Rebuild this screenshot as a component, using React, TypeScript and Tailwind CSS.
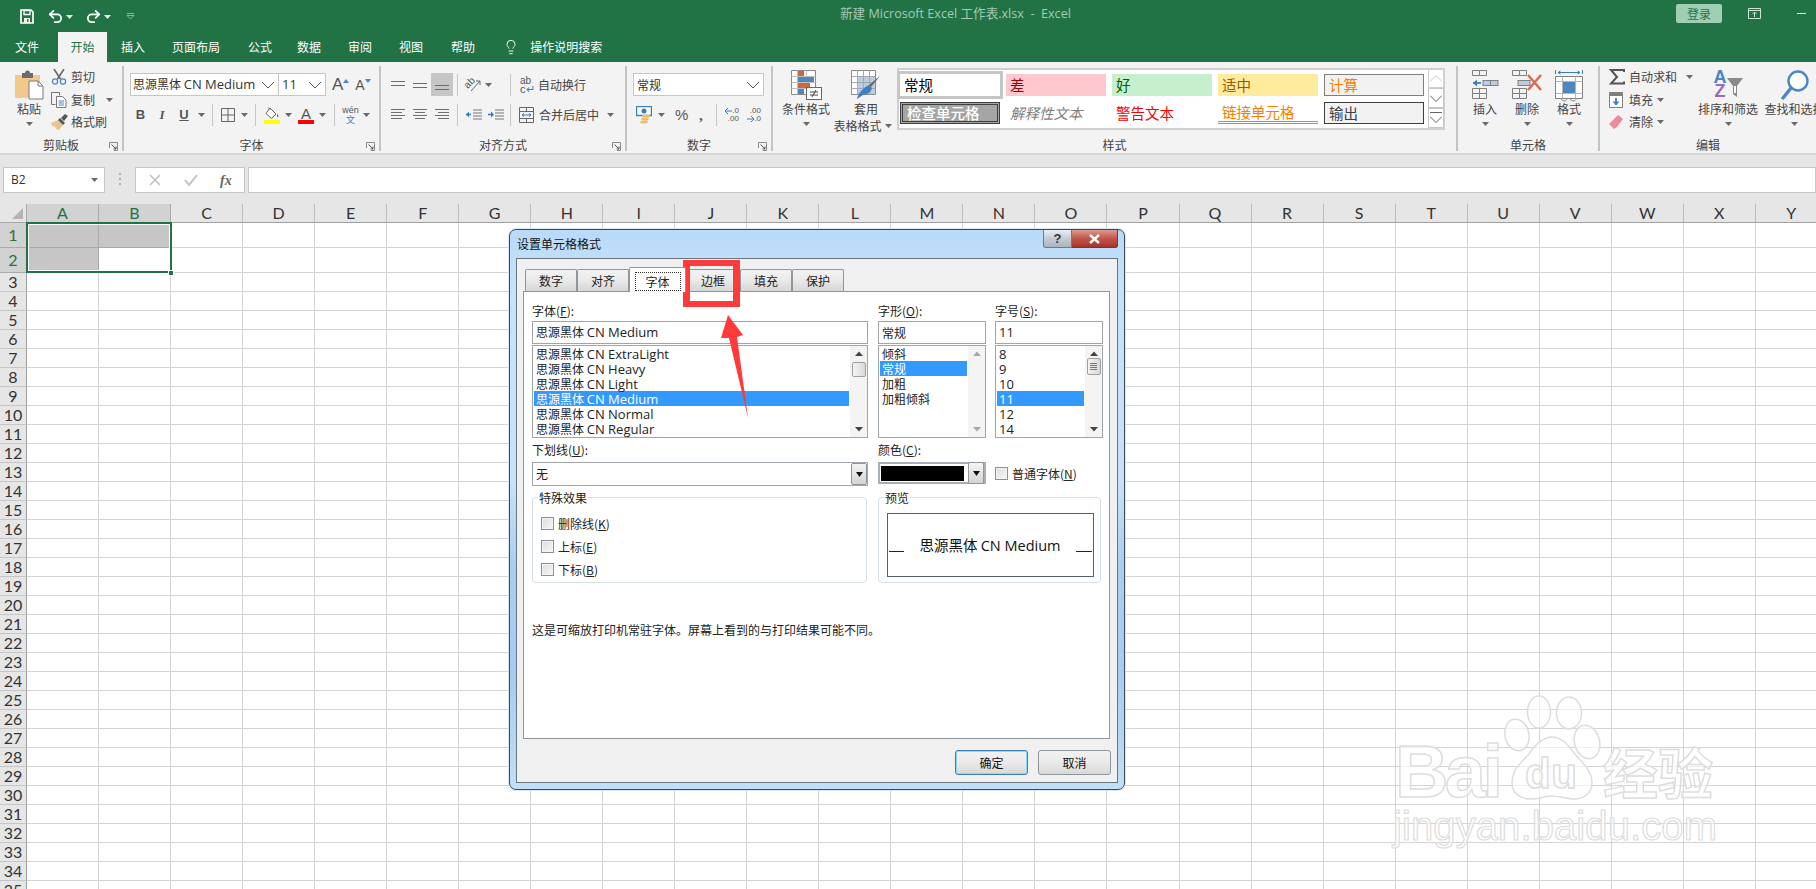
import React from 'react';
import { Lightbulb, Redo2, Undo2 } from 'lucide-react';

const columns = 'ABCDEFGHIJKLMNOPQRSTUVWXY'.split('');
const rows = Array.from({ length: 35 }, (_, i) => i + 1);

const Caret = ({ className = '', color = '#6a6a6a' }: { className?: string; color?: string }) => (
  <svg width="7" height="4" viewBox="0 0 7 4" className={`shrink-0 ${className}`}>
    <path d="M0 0h7L3.5 4z" fill={color} />
  </svg>
);

const Chevron = ({ className = '' }: { className?: string }) => (
  <svg width="14" height="8" viewBox="0 0 14 8" className={`shrink-0 ${className}`}>
    <path d="M1 1l6 6 6-6" fill="none" stroke="#555" strokeWidth="1" />
  </svg>
);

const Sep = ({ className = '' }: { className?: string }) => (
  <div className={`w-[1px] h-[22px] shrink-0 bg-[#c6c6c6] ${className}`} />
);

const GroupSep = () => <div className="w-[2px] h-[85px] shrink-0 bg-[#c4c4c4]" />;

const Launcher = () => (
  <svg width="9" height="9" viewBox="0 0 9 9" className="absolute right-[4px] bottom-[2px]">
    <path d="M.5 6V.5H8.5V8.5H5" fill="none" stroke="#8a8a8a" />
    <path d="M2.5 2.5L7 7M7 4.5V7H4.5" fill="none" stroke="#555" />
  </svg>
);

const Group = ({ width, label, launcher, children }: { width: string; label: string; launcher?: boolean; children: React.ReactNode }) => (
  <div className={`relative shrink-0 h-[87px] flex flex-col ${width}`}>
    <div className="h-[71px]">{children}</div>
    <div className="h-[16px] leading-[16px] text-center text-[12px] text-[#444]">{label}</div>
    {launcher && <Launcher />}
  </div>
);

// align icon lines: y offsets, and left / center / right
const AlignIcon = ({ ys, mode }: { ys: number[]; mode: 'l' | 'c' | 'r' | 'f' }) => (
  <svg width="14" height="12" viewBox="0 0 14 12" className="shrink-0">
    {ys.map((y, i) => {
      const short = mode !== 'f' && i % 2 === 1;
      const x1 = mode === 'r' && short ? 3 : mode === 'c' && short ? 2 : 0;
      const x2 = mode === 'l' && short ? 11 : mode === 'c' && short ? 12 : 14;
      return <line key={i} x1={x1} x2={x2} y1={y + 0.5} y2={y + 0.5} stroke="#6e6e6e" />;
    })}
  </svg>
);

const PasteIcon = () => (
  <svg width="29" height="30" viewBox="0 0 29 30" className="block">
    <path d="M0 5h25v23H0z" fill="#f1c98a" />
    <path d="M7 3h3a2.5 2.5 0 0 1 5 0h3v5H7z" fill="#6c6c6c" />
    <path d="M14 11h9l5 5v13H14z" fill="#fff" stroke="#7a7a7a" />
    <path d="M23 11v5h5" fill="none" stroke="#7a7a7a" />
  </svg>
);

const ScissorsIcon = () => (
  <svg width="16" height="16" viewBox="0 0 16 16">
    <path d="M3 0l6.5 10M13 0L6.5 10" stroke="#666" strokeWidth="1.6" fill="none" />
    <circle cx="4" cy="12.5" r="2.6" fill="none" stroke="#4a86c5" strokeWidth="1.2" />
    <circle cx="12" cy="12.5" r="2.6" fill="none" stroke="#4a86c5" strokeWidth="1.2" />
  </svg>
);

const CopyIcon = () => (
  <svg width="16" height="16" viewBox="0 0 16 16">
    <path d="M.5.5h8v3M.5.5v12h4" fill="none" stroke="#777" />
    <path d="M5.5 4.5h6l3.5 3.5v7.500h-9.500z" fill="#fff" stroke="#777" />
    <path d="M7.500 9h5.500M7.500 11h5.500M7.500 13h5.500" stroke="#4a86c5" />
  </svg>
);

const BrushIcon = () => (
  <svg width="18" height="16" viewBox="0 0 18 16">
    <path d="M0 9l7-3 5 5-4 5-3-1-1-3-2 1z" fill="#eac48c" />
    <path d="M7 6l2-2 5 5-2 2z" fill="#555" />
    <path d="M10 4l4-4 3 2-4 5z" fill="#555" />
  </svg>
);

const FontLetter = ({ size, up }: { size: string; up: boolean }) => (
  <div className="relative flex items-end h-[16px]">
    <span className={`leading-[16px] text-[#555] [font-family:'Liberation_Sans',sans-serif] ${size}`}>A</span>
    <svg width="6" height="4" viewBox="0 0 6 4" className="mb-[10px]">
      <path d={up ? 'M0 4h6L3 0z' : 'M0 0h6L3 4z'} fill="#4a86c5" />
    </svg>
  </div>
);

const BorderIcon = () => (
  <svg width="14" height="14" viewBox="0 0 14 14" className="shrink-0">
    <path d="M.5.500h13v13H.5zM7 .5v13M.5 7h13" fill="none" stroke="#666" />
  </svg>
);

const FillIcon = () => (
  <svg width="16" height="17" viewBox="0 0 16 17" className="shrink-0">
    <path d="M6 1l6 6-4.500 4.500L2 6.500z" fill="#fff" stroke="#666" />
    <path d="M4 .5l2 2" stroke="#666" />
    <path d="M13.500 7c1 1.500 1.500 2.500.5 3s-1.500-1.500-.5-3z" fill="#666" />
    <rect x="0" y="13" width="16" height="4" fill="#ffff00" />
  </svg>
);

const OrientIcon = () => (
  <div className="relative w-[16px] h-[16px] shrink-0">
    <span className="absolute left-[-2px] top-[0px] text-[10px] leading-[12px] text-[#555] rotate-[-45deg] [font-family:'Liberation_Sans',sans-serif]">ab</span>
    <svg width="16" height="16" viewBox="0 0 16 16" className="absolute left-[0px] top-[0px]">
      <path d="M5 14L14 4M10 4h4v4" fill="none" stroke="#666" />
    </svg>
  </div>
);

const IndentIcon = ({ flip }: { flip?: boolean }) => (
  <svg width="16" height="12" viewBox="0 0 16 12" className="shrink-0">
    <path d="M7 1h9M7 4h9M7 7h9M7 10h9" stroke="#777" />
    <path d="M0 5.500h5" stroke="#3b7dc4" strokeWidth="1.600" />
    <path d={flip ? 'M3 2.500l3 3-3 3z' : 'M3 2.500l-3 3 3 3z'} fill="#3b7dc4" />
  </svg>
);

const MergeIcon = () => (
  <svg width="15" height="16" viewBox="0 0 15 16" className="shrink-0">
    <path d="M.5.500h14v15H.5zM.5 4.500h14M.5 11.500h14M7.500.5v4M7.500 11.500v4" fill="none" stroke="#666" />
    <path d="M3 8h9M3 8l2-1.500M3 8l2 1.500M12 8l-2-1.500M12 8l-2 1.500" fill="none" stroke="#3b7dc4" />
  </svg>
);

const MoneyIcon = () => (
  <svg width="16" height="18" viewBox="0 0 16 18" className="shrink-0">
    <rect x=".5" y=".5" width="15" height="9" fill="#fff" stroke="#3b7dc4" strokeWidth="1.400" />
    <circle cx="8" cy="5" r="2.500" fill="#3b7dc4" />
    <ellipse cx="10" cy="10" rx="4" ry="1.600" fill="#eebd71" />
    <ellipse cx="9" cy="13" rx="4" ry="1.600" fill="#eebd71" />
    <ellipse cx="8" cy="16" rx="4" ry="1.600" fill="#eebd71" />
  </svg>
);

const DecimalIcon = ({ left, right, inc }: { left: string; right: string; inc: boolean }) => (
  <div className="w-[15px] h-[16px] flex flex-col text-[8px] leading-[8px] text-[#555] [font-family:'Liberation_Sans',sans-serif]">
    <div className="flex justify-end items-center h-[8px]">
      {inc && <svg width="7" height="6" viewBox="0 0 7 6"><path d="M0 3h7M0 3l3-3M0 3l3 3" stroke="#3b7dc4" fill="none" /></svg>}
      <span>{left}</span>
    </div>
    <div className="flex justify-end items-center h-[8px]">
      {!inc && <svg width="7" height="6" viewBox="0 0 7 6"><path d="M0 3h7M7 3L4 0M7 3L4 6" stroke="#3b7dc4" fill="none" /></svg>}
      <span>{right}</span>
    </div>
  </div>
);

const CondFormatIcon = () => (
  <svg width="31" height="30" viewBox="0 0 31 30" className="block">
    <path d="M.5.500h24v24H.5z" fill="#fff" stroke="#8a8a8a" />
    <path d="M6.500.5v24M15.500.5v24M.5 6.500h24M.5 12.500h24M.5 18.500h24" stroke="#bdbdbd" />
    <rect x="7" y="1" width="6" height="5" fill="#d4643f" />
    <rect x="7" y="7" width="16" height="5" fill="#4f86bd" />
    <rect x="7" y="13" width="12" height="5" fill="#d4643f" />
    <rect x="7" y="19" width="6" height="5" fill="#4f86bd" />
    <rect x="15.500" y="17.500" width="15" height="12" fill="#fff" stroke="#666" />
    <path d="M19 22h8M19 25h8M25 20l-4 7" stroke="#444" fill="none" />
  </svg>
);

const TableIcon = () => (
  <svg width="30" height="30" viewBox="0 0 30 30" className="block">
    <path d="M.5.500h24v24H.5z" fill="#fff" stroke="#8a8a8a" />
    <rect x="7" y="6" width="17" height="18" fill="#b9cde5" />
    <path d="M6.500.5v24M12.500.5v24M18.500.5v24M.5 6.500h24M.5 12.500h24M.5 18.500h24" stroke="#a8a8a8" />
    <path d="M29 6l-9 11-2-2z" fill="#666" />
    <path d="M18 15l3 3c-1 4-4 6-9 7l-6 4c1-6 6-11 12-14z" fill="#3f7fc0" />
  </svg>
);

const InsertIcon = () => (
  <svg width="27" height="30" viewBox="0 0 27 30" className="block">
    <path d="M.5.500h14v5H.5zM7.500.5v5M.5 18.500h14v10H.5zM.5 23.500h14M7.500 18.500v10" fill="none" stroke="#808080" />
    <rect x="11" y="10.500" width="15" height="5" fill="#b9cde5" stroke="#808080" />
    <path d="M18.500 10.500v5" stroke="#808080" />
    <path d="M1 13h8" stroke="#3b7dc4" strokeWidth="1.800" />
    <path d="M5 9.500L1 13l4 3.500z" fill="#3b7dc4" />
  </svg>
);

const DeleteIcon = () => (
  <svg width="31" height="30" viewBox="0 0 31 30" className="block">
    <path d="M.5.500h14v5H.5zM7.500.5v5M.5 18.500h14v10H.5zM.5 23.500h14M7.500 18.500v10" fill="none" stroke="#808080" />
    <rect x="6" y="10.500" width="12" height="5" fill="#b9cde5" stroke="#808080" />
    <path d="M16 5l13 15M29 5L16 20" stroke="#dd6a48" strokeWidth="2.400" />
  </svg>
);

const CellFormatIcon = () => (
  <svg width="28" height="32" viewBox="0 0 28 32" className="block">
    <path d="M.5 0v4M27.500 0v4M3 2.500h22M3 2.500l2.500-1.500M3 2.500L5.500 4M25 2.500L22.500 1M25 2.500L22.500 4" fill="none" stroke="#3b7dc4" />
    <path d="M.5 6.500h27v22H.5z" fill="#fff" stroke="#808080" />
    <path d="M.5 11.500h27M.5 23.500h27M7.500 6.500v22M20.500 6.500v22" stroke="#b5b5b5" />
    <rect x="8" y="12" width="12" height="11" fill="#4f86bd" />
    <path d="M6 28.500c1 3 5 3 6 1M15 28.500c1 3 5 3 6 1" fill="none" stroke="#808080" />
  </svg>
);

const SigmaIcon = () => (
  <svg width="16" height="16" viewBox="0 0 16 16" className="shrink-0">
    <path d="M15 3V1H2l6 7-6 6.500h13v-2" fill="none" stroke="#555" strokeWidth="2" />
  </svg>
);

const FillDownIcon = () => (
  <svg width="14" height="16" viewBox="0 0 14 16" className="shrink-0">
    <path d="M.5.500h13v15H.5z" fill="#fff" stroke="#808080" />
    <rect x="1" y="1" width="12" height="3" fill="#808080" />
    <path d="M7 6v7" stroke="#3b7dc4" strokeWidth="1.800" />
    <path d="M3.500 9.500L7 13.500l3.500-4z" fill="#3b7dc4" />
  </svg>
);

const EraserIcon = () => (
  <svg width="14" height="14" viewBox="0 0 14 14" className="shrink-0">
    <path d="M9 0l5 4-6 8-3 2-3-3-2-2z" fill="#ee8a9e" />
  </svg>
);

const FunnelIcon = () => (
  <svg width="16" height="19" viewBox="0 0 16 19">
    <path d="M0 0h16l-6 8v11l-4-3V8z" fill="#8a8a8a" />
    <path d="M7 8h2v7H7z" fill="#fff" />
  </svg>
);

const FindIcon = () => (
  <svg width="28" height="30" viewBox="0 0 28 30" className="block">
    <circle cx="17" cy="11" r="9.500" fill="#fff" stroke="#4a86c5" strokeWidth="2.400" />
    <path d="M10 18L2 28" stroke="#4a86c5" strokeWidth="3.400" strokeLinecap="round" />
  </svg>
);

const SmallBtn = ({ icon, label, caret }: { icon: React.ReactNode; label: string; caret?: string }) => (
  <div className="flex items-center h-[22.500px]">
    <div className="w-[20px] flex justify-start shrink-0">{icon}</div>
    <span className="text-[12px] leading-[18px] text-[#444]">{label}</span>
    {caret && <Caret className={caret} />}
  </div>
);

const BigBtn = ({ icon, label, width }: { icon: React.ReactNode; label: string; width: string }) => (
  <div className={`shrink-0 flex flex-col items-center pt-[4px] ${width}`}>
    <div className="h-[30px] flex items-start justify-center">{icon}</div>
    <div className="h-[18px] leading-[18px] text-[12px] text-[#444] whitespace-nowrap">{label}</div>
    <Caret className="mt-[4px]" />
  </div>
);

const StyleCell = ({ className, children }: { className: string; children: React.ReactNode }) => (
  <div className={`h-[22px] flex items-center text-[14.500px] leading-[20px] pl-[4px] whitespace-nowrap ${className}`}>{children}</div>
);

const FontName = ({ rest, size = 'text-[12px]', latin = 'text-[13px]' }: { rest: string; size?: string; latin?: string }) => (
  <span className={`${size} whitespace-nowrap`}>
    思源黑体 <span className={`${latin} [font-family:'Open_Sans',sans-serif]`}>{rest}</span>
  </span>
);

const ScrollArrow = ({ down, color = '#444' }: { down?: boolean; color?: string }) => (
  <svg width="8" height="5" viewBox="0 0 8 5">
    <path d={down ? 'M0 0h8L4 4.500z' : 'M0 5h8L4 .5z'} fill={color} />
  </svg>
);

const ListBox = ({ items, selected, width, thumb, disabled, grip }: { items: React.ReactNode[]; selected?: number; width: string; thumb?: string; disabled?: boolean; grip?: boolean }) => (
  <div className={`mt-[1px] h-[93px] flex border border-[#9fa6ab] bg-white ${width}`}>
    <div className="flex-1 min-w-0 px-[1px]">
      {items.map((item, i) => (
        <div key={i} className={`h-[15px] leading-[15px] pl-[2px] text-[12px] ${i === selected ? 'bg-[#3399ff] text-white' : 'text-[#222]'}`}>{item}</div>
      ))}
    </div>
    <div className="w-[17px] shrink-0 bg-[#f4f4f4] flex flex-col items-center py-[5px]">
      <ScrollArrow color={disabled ? '#a8a8a8' : '#444'} />
      {thumb && (
        <div className={`w-[14px] border border-[#a0a0a0] rounded-[2px] bg-[linear-gradient(90deg,#f4f4f4,#d8d8d8)] flex flex-col items-center justify-center gap-[1px] ${thumb}`}>
          {grip && [0, 1, 2, 3].map(i => <div key={i} className="w-[7px] h-[1px] bg-[#777]" />)}
        </div>
      )}
      <div className="flex-1" />
      <ScrollArrow down color={disabled ? '#a8a8a8' : '#444'} />
    </div>
  </div>
);

const ComboArrow = () => (
  <div className="w-[16px] h-[22px] shrink-0 border border-[#8f969c] rounded-[2px] bg-[linear-gradient(180deg,#f4f4f4,#d4d4d4)] flex items-center justify-center">
    <svg width="7" height="5" viewBox="0 0 7 5"><path d="M0 0h7L3.500 5z" fill="#111" /></svg>
  </div>
);

const CheckBox = ({ label, hot }: { label: string; hot: string }) => (
  <div className="flex items-center h-[23px]">
    <div className="w-[13px] h-[13px] shrink-0 border border-[#8e8f8f] bg-[linear-gradient(135deg,#dcdcdc,#f8f8f8)] shadow-[inset_0_0_0_1px_#f4f4f4]" />
    <span className="ml-[4px] text-[12px] leading-[18px] text-[#222] whitespace-nowrap">{label}(<span className="underline">{hot}</span>)</span>
  </div>
);

const DialogTab = ({ label, width, active }: { label: string; width: string; active?: boolean }) => (
  active ? (
    <div className={`relative z-10 h-[25px] -mb-[1px] flex items-center justify-center bg-white border border-b-0 border-[#8f969c] rounded-t-[2px] text-[12px] text-[#222] ${width}`}>
      <div className="mt-[2px] w-[46px] h-[19px] leading-[17px] text-center border border-dotted border-[#333]">{label}</div>
    </div>
  ) : (
    <div className={`h-[22px] flex items-center justify-center border border-b-0 border-[#8f969c] rounded-t-[2px] bg-[linear-gradient(180deg,#f2f2f2,#ebebeb_45%,#d6d6d6)] text-[12px] text-[#222] ${width}`}>{label}</div>
  )
);

const DialogButton = ({ label, primary }: { label: string; primary?: boolean }) => (
  <div className={`w-[73px] h-[25px] flex items-center justify-center rounded-[3px] border text-[12px] text-[#111] bg-[linear-gradient(180deg,#f2f2f2,#ebebeb_45%,#d8d8d8)] ${primary ? 'border-[#3c7fb1] shadow-[inset_0_0_0_1px_#8fd8f5]' : 'border-[#8f969c]'}`}>{label}</div>
);

const Watermark = () => (
  <svg width="340" height="165" viewBox="1385 690 340 165" className="absolute left-[1385px] top-[690px] pointer-events-none">
    <g fill="#ffffff" fillOpacity=".62" stroke="#dddddd" strokeWidth="1.500">
      <text x="1395" y="797" fontFamily="'Liberation Sans',sans-serif" fontWeight="700" fontSize="74" textLength="108">Bai</text>
      <ellipse cx="1517" cy="735" rx="12" ry="16" transform="rotate(-12 1517 735)" />
      <ellipse cx="1539" cy="712" rx="11.500" ry="16" />
      <ellipse cx="1569" cy="713" rx="12.500" ry="16" />
      <ellipse cx="1587" cy="742" rx="12.500" ry="17" transform="rotate(-15 1587 742)" />
      <path d="M1552 737c-10 0-17 8-23 17-7 8-17 15-17 29 0 11 9 16 19 16 8 0 14-3 21-3s15 3 22 3c10 0 18-6 18-16 0-14-11-21-18-30-6-8-12-16-22-16z" />
      <text x="1525" y="788" fontFamily="'Liberation Sans',sans-serif" fontWeight="700" fontSize="42" textLength="52">du</text>
      <text x="1603" y="794" fontFamily="'Noto Sans CJK SC',sans-serif" fontWeight="700" fontSize="55">经验</text>
      <text x="1393" y="840" fontFamily="'Liberation Sans',sans-serif" fontSize="40" textLength="324" strokeWidth="1.200">jingyan.baidu.com</text>
    </g>
  </svg>
);

export default function App() {
  return (
    <div className="relative w-[1816px] h-[889px] overflow-hidden bg-white text-[12px] [font-family:'Noto_Sans_CJK_SC','Noto_Sans',sans-serif]">
      {/* title bar */}
      <div className="h-[32px] bg-[#217346] flex items-center">
        <div className="w-[840px] shrink-0 flex items-center pl-[20px]">
          <svg width="14" height="15" viewBox="0 0 14 15">
            <path d="M1 1h10l2 2v11H1z" fill="none" stroke="#fff" strokeWidth="1.700" />
            <path d="M4 1.500h6v4H4z" fill="none" stroke="#fff" strokeWidth="1.300" />
            <rect x="4" y="9" width="6" height="5" fill="#fff" />
            <rect x="7" y="10" width="1.500" height="3" fill="#217346" />
          </svg>
          <Undo2 size={17} strokeWidth={2.500} color="#fff" className="ml-[13px]" />
          <Caret color="#e8f1ec" className="ml-[2px] mt-[2px]" />
          <Redo2 size={17} strokeWidth={2.500} color="#fff" className="ml-[12px]" />
          <Caret color="#e8f1ec" className="ml-[2px] mt-[2px]" />
          <svg width="9" height="7" viewBox="0 0 9 7" className="ml-[15px]">
            <path d="M1 .5h7M1 2.500h7L4.500 6z" fill="none" stroke="#87b49c" />
          </svg>
        </div>
        <div className="shrink-0 mb-[4px] text-[12.600px] leading-[18px] text-[#a6cab6] whitespace-pre [font-family:'Open_Sans','Noto_Sans_CJK_SC',sans-serif]">新建 Microsoft Excel 工作表.xlsx  -  Excel</div>
        <div className="flex-1" />
        <div className="w-[46px] h-[19px] mb-[5px] rounded-[2px] bg-[#a0cfb3] flex items-center justify-center text-[12px] text-[#217346]">登录</div>
        <svg width="13" height="11" viewBox="0 0 13 11" className="ml-[26px] mb-[5px]">
          <path d="M.5.500h12v10H.5zM.5 2.500h12M6.500 9V4.500M4.500 6l2-2 2 2" fill="none" stroke="#cfe3d7" />
        </svg>
        <div className="ml-[36px] mr-[10px] w-[9px] h-[1px] mb-[5px] bg-[#e8f1ec]" />
      </div>

      {/* tabs */}
      <div className="h-[30px] bg-[#217346] flex items-stretch text-white text-[12px]">
        <div className="ml-[15px] flex items-center">文件</div>
        <div className="ml-[19px] w-[49px] bg-[#f3f3f3] text-[#217346] flex items-center justify-center">开始</div>
        {[['插入', 'ml-[14px]'], ['页面布局', 'ml-[27px]'], ['公式', 'ml-[28px]'], ['数据', 'ml-[25px]'], ['审阅', 'ml-[27px]'], ['视图', 'ml-[27px]'], ['帮助', 'ml-[28px]']].map(([t, ml]) => (
          <div key={t} className={`flex items-center ${ml}`}>{t}</div>
        ))}
        <div className="ml-[28px] flex items-center"><Lightbulb size={16} strokeWidth={1.400} color="#fff" /></div>
        <div className="ml-[11px] flex items-center">操作说明搜索</div>
      </div>

      {/* ribbon */}
      <div className="h-[93px] bg-[#f3f3f3] border-b-2 border-[#d6d6d6] pt-[4px] flex items-start text-[#444]">
        <Group width="w-[122px]" label="剪贴板" launcher>
          <div className="flex">
            <div className="w-[51px] shrink-0 pl-[15px] pt-[4px] flex flex-col">
              <PasteIcon />
              <div className="w-[28px] text-center leading-[18px] text-[#444]">粘贴</div>
              <div className="w-[28px] flex justify-center mt-[4px]"><Caret /></div>
            </div>
            <div className="flex flex-col">
              <SmallBtn icon={<ScissorsIcon />} label="剪切" />
              <SmallBtn icon={<CopyIcon />} label="复制" caret="ml-[11px]" />
              <SmallBtn icon={<BrushIcon />} label="格式刷" />
            </div>
          </div>
        </Group>
        <GroupSep />

        <Group width="w-[255px]" label="字体" launcher>
          <div className="flex items-center mt-[7px] pl-[6px]">
            <div className="w-[149px] h-[23px] bg-white border border-[#c6c6c6] flex items-center pl-[2px] justify-between pr-[3px] text-[#333]">
              <FontName rest="CN Medium" />
              <Chevron />
            </div>
            <div className="w-[48px] h-[23px] -ml-[1px] bg-white border border-[#c6c6c6] flex items-center pl-[3px] justify-between pr-[3px] text-[13px] text-[#333] [font-family:'Open_Sans',sans-serif]">
              11
              <Chevron />
            </div>
            <div className="ml-[6px]"><FontLetter size="text-[17px]" up /></div>
            <div className="ml-[6px]"><FontLetter size="text-[14px]" up={false} /></div>
          </div>
          <div className="flex items-center h-[22px] mt-[8px] pl-[6px]">
            <div className="w-[21px] text-center font-bold text-[13px] text-[#555] [font-family:'Liberation_Sans',sans-serif]">B</div>
            <div className="w-[22px] text-center italic font-bold text-[13px] text-[#555] [font-family:'Liberation_Serif',serif]">I</div>
            <div className="w-[22px] text-center underline font-bold text-[13px] text-[#555] [font-family:'Liberation_Sans',sans-serif]">U</div>
            <Caret className="ml-[3px]" />
            <Sep className="ml-[7px]" />
            <div className="ml-[8px]"><BorderIcon /></div>
            <Caret className="ml-[6px]" />
            <Sep className="ml-[7px]" />
            <div className="ml-[8px]"><FillIcon /></div>
            <Caret className="ml-[5px]" />
            <div className="ml-[6px] w-[16px] flex flex-col items-center">
              <span className="h-[13px] leading-[13px] text-[15px] text-[#555] [font-family:'Liberation_Sans',sans-serif]">A</span>
              <div className="w-[16px] h-[4px] bg-[#ff0000]" />
            </div>
            <Caret className="ml-[5px]" />
            <Sep className="ml-[8px]" />
            <div className="ml-[8px] w-[15px] flex flex-col items-center leading-[9px]">
              <span className="text-[9px] text-[#555] [font-family:'Liberation_Sans',sans-serif]">wén</span>
              <span className="text-[9px] text-[#3b7dc4]">文</span>
            </div>
            <Caret className="ml-[5px]" />
          </div>
        </Group>
        <GroupSep />

        <Group width="w-[244px]" label="对齐方式" launcher>
          <div className="flex items-center h-[23px] mt-[7px]">
            <div className="ml-[10px]"><AlignIcon ys={[2, 6]} mode="f" /></div>
            <div className="ml-[8px]"><AlignIcon ys={[4, 8]} mode="f" /></div>
            <div className="ml-[4px] w-[22px] h-[23px] bg-[#c6c6c6] flex items-end justify-center pb-[3px]"><AlignIcon ys={[4, 8]} mode="f" /></div>
            <Sep className="ml-[4px]" />
            <div className="ml-[8px]"><OrientIcon /></div>
            <Caret className="ml-[3px]" />
            <Sep className="ml-[18px]" />
            <div className="ml-[9px] w-[12px] flex flex-col text-[10px] leading-[9px] text-[#555] [font-family:'Liberation_Sans',sans-serif]">
              <span>ab</span>
              <span className="text-[11px]">c<span className="text-[#3b7dc4]">↵</span></span>
            </div>
            <span className="ml-[6px] text-[#444] whitespace-nowrap">自动换行</span>
          </div>
          <div className="flex items-center h-[22px] mt-[8px]">
            <div className="ml-[10px]"><AlignIcon ys={[0, 3, 6, 9]} mode="l" /></div>
            <div className="ml-[8px]"><AlignIcon ys={[0, 3, 6, 9]} mode="c" /></div>
            <div className="ml-[8px]"><AlignIcon ys={[0, 3, 6, 9]} mode="r" /></div>
            <Sep className="ml-[8px]" />
            <div className="ml-[8px]"><IndentIcon /></div>
            <div className="ml-[6px]"><IndentIcon flip /></div>
            <Sep className="ml-[6px]" />
            <div className="ml-[8px]"><MergeIcon /></div>
            <span className="ml-[5px] text-[#444] whitespace-nowrap">合并后居中</span>
            <Caret className="ml-[8px]" />
          </div>
        </Group>
        <GroupSep />

        <Group width="w-[144px]" label="数字" launcher>
          <div className="ml-[6px] mt-[7px] w-[131px] h-[23px] bg-white border border-[#c6c6c6] flex items-center justify-between pl-[3px] pr-[3px] text-[#333]">
            常规
            <Chevron />
          </div>
          <div className="flex items-center h-[22px] mt-[8px]">
            <div className="ml-[9px]"><MoneyIcon /></div>
            <Caret className="ml-[6px]" />
            <span className="ml-[10px] text-[15px] text-[#555] [font-family:'Liberation_Sans',sans-serif]">%</span>
            <span className="ml-[11px] text-[14px] font-bold text-[#555] [font-family:'Liberation_Serif',serif]">,</span>
            <Sep className="ml-[13px]" />
            <div className="ml-[7px]"><DecimalIcon left=".0" right=".00" inc /></div>
            <div className="ml-[7px]"><DecimalIcon left=".00" right=".0" inc={false} /></div>
          </div>
        </Group>
        <GroupSep />

        <Group width="w-[683px]" label="样式">
          <div className="flex">
            <BigBtn icon={<CondFormatIcon />} label="条件格式" width="w-[66px]" />
            <div className="w-[54px] shrink-0 flex flex-col items-center pt-[4px]">
              <div className="h-[30px]"><TableIcon /></div>
              <div className="h-[18px] leading-[18px] text-[#444]">套用</div>
              <div className="flex items-center -ml-[7px] whitespace-nowrap leading-[16px] text-[#444]">
                表格格式
                <Caret className="ml-[3px]" />
              </div>
            </div>
            <div className="ml-[4px] mt-[2px] w-[548px] h-[62px] bg-white border-2 border-[#d0d0d0] flex justify-between">
              <div className="grid grid-cols-[repeat(5,100px)] gap-x-[6px] gap-y-[6px] pl-[1px] pt-[4px] content-start">
                <StyleCell className="bg-white text-[#000] shadow-[0_0_0_3px_#c6c6c6]">常规</StyleCell>
                <StyleCell className="bg-[#ffc7ce] text-[#9c0006]">差</StyleCell>
                <StyleCell className="bg-[#c6efce] text-[#006100]">好</StyleCell>
                <StyleCell className="bg-[#ffeb9c] text-[#9c5700]">适中</StyleCell>
                <StyleCell className="bg-[#f2f2f2] text-[#fa7d00] border border-[#7f7f7f]">计算</StyleCell>
                <StyleCell className="bg-[#a5a5a5] text-white border-[3px] border-double border-[#3f3f3f] font-medium pl-[3px]">检查单元格</StyleCell>
                <StyleCell className="text-[#7f7f7f] italic">解释性文本</StyleCell>
                <StyleCell className="text-[#ff0000]">警告文本</StyleCell>
                <StyleCell className="text-[#fa7d00] border-b-[3px] border-double border-[#fa7d00]">链接单元格</StyleCell>
                <StyleCell className="bg-[#f2f2f2] text-[#3f3f3f] border border-[#3f3f3f]">输出</StyleCell>
              </div>
              <div className="w-[16px] shrink-0 flex flex-col -mr-[1px] -mt-[1px]">
                <div className="h-[20px] border border-[#d0d0d0] flex items-center justify-center">
                  <svg width="12" height="7" viewBox="0 0 12 7"><path d="M0 6.500l6-6 6 6" fill="none" stroke="#c6c6c6" /></svg>
                </div>
                <div className="h-[20px] border border-[#c6c6c6] flex items-center justify-center">
                  <svg width="12" height="7" viewBox="0 0 12 7"><path d="M0 .5l6 6 6-6" fill="none" stroke="#666" /></svg>
                </div>
                <div className="h-[21px] border border-[#c6c6c6] flex flex-col items-center justify-center gap-[3px]">
                  <div className="w-[12px] h-[1px] bg-[#666]" />
                  <svg width="12" height="7" viewBox="0 0 12 7"><path d="M0 .5l6 6 6-6" fill="none" stroke="#666" /></svg>
                </div>
              </div>
            </div>
          </div>
        </Group>
        <GroupSep />

        <Group width="w-[140px]" label="单元格">
          <div className="flex pl-[6px]">
            <BigBtn icon={<InsertIcon />} label="插入" width="w-[42px]" />
            <BigBtn icon={<DeleteIcon />} label="删除" width="w-[42px]" />
            <BigBtn icon={<CellFormatIcon />} label="格式" width="w-[42px]" />
          </div>
        </Group>
        <GroupSep />

        <Group width="w-[216px]" label="编辑">
          <div className="flex">
            <div className="w-[96px] shrink-0 pl-[9px] flex flex-col">
              <SmallBtn icon={<SigmaIcon />} label="自动求和" caret="ml-[9px]" />
              <SmallBtn icon={<FillDownIcon />} label="填充" caret="ml-[4px]" />
              <SmallBtn icon={<EraserIcon />} label="清除" caret="ml-[4px]" />
            </div>
            <div className="w-[64px] shrink-0 flex flex-col items-center pt-[4px]">
              <div className="h-[30px] flex items-start justify-center">
                <div className="flex flex-col items-center text-[18px] leading-[14px] font-bold [font-family:'Liberation_Sans',sans-serif]">
                  <span className="text-[#4a86c5]">A</span>
                  <span className="text-[#9a6bbd]">Z</span>
                </div>
                <div className="mt-[8px]"><FunnelIcon /></div>
              </div>
              <div className="h-[18px] leading-[18px] whitespace-nowrap text-[#444]">排序和筛选</div>
              <Caret className="mt-[4px]" />
            </div>
            <div className="w-[66px] shrink-0 flex flex-col items-center pt-[4px] pl-[3px]">
              <div className="h-[30px]"><FindIcon /></div>
              <div className="h-[18px] leading-[18px] whitespace-nowrap text-[#444]">查找和选择</div>
              <Caret className="mt-[4px]" />
            </div>
          </div>
        </Group>
      </div>

      {/* formula bar */}
      <div className="h-[49px] bg-[#e6e6e6] flex items-start pt-[12px]">
        <div className="ml-[3px] w-[102px] h-[26px] bg-white border border-[#c6c6c6] flex items-center justify-between pl-[7px] pr-[6px] text-[12px] text-[#333] [font-family:'Open_Sans',sans-serif]">
          B2
          <Caret />
        </div>
        <div className="ml-[14px] mt-[6px] flex flex-col gap-[3px]">
          {[0, 1, 2].map(i => <div key={i} className="w-[2px] h-[2px] bg-[#b0b0b0]" />)}
        </div>
        <div className="ml-[14px] w-[110px] h-[26px] bg-white border border-[#c6c6c6] flex items-center pl-[13px] text-[#bdbdbd]">
          <svg width="12" height="12" viewBox="0 0 12 12"><path d="M1 1l10 10M11 1L1 11" stroke="#c2c2c2" strokeWidth="1.600" /></svg>
          <svg width="14" height="12" viewBox="0 0 14 12" className="ml-[23px]"><path d="M1 6l4 5 8-10" fill="none" stroke="#c2c2c2" strokeWidth="2" /></svg>
          <span className="ml-[22px] italic text-[14px] font-bold text-[#666] [font-family:'Liberation_Serif',serif]">fx</span>
        </div>
        <div className="ml-[3px] flex-1 h-[26px] bg-white border border-[#c6c6c6]" />
      </div>

      {/* sheet */}
      <div className="[font-family:Lato,sans-serif] text-[16px]">
        <div className="flex h-[19px]">
          <div className="w-[27px] shrink-0 bg-[#e6e6e6] border-r border-b border-[#a8a8a8] flex items-end justify-end pr-[3px] pb-[3px]">
            <svg width="11" height="11" viewBox="0 0 11 11"><path d="M11 0v11H0z" fill="#b4b4b4" /></svg>
          </div>
          {columns.map((c, i) => (
            <div key={c} className={`w-[72.040px] shrink-0 flex items-center justify-center border-r border-b border-b-[#a0a0a0] leading-[18px] ${i < 2 ? 'bg-[#d2d2d2] border-r-[#aaaaaa] text-[#217346]' : 'bg-[#e6e6e6] border-r-[#bcbcbc] text-[#333]'}`}>{c}</div>
          ))}
        </div>
        {rows.map(r => (
          <div key={r} className={`flex ${r < 3 ? 'h-[25px]' : 'h-[19px]'}`}>
            <div className={`w-[27px] shrink-0 border-r border-b border-r-[#a0a0a0] flex items-center justify-center leading-[18px] ${r < 3 ? 'bg-[#d2d2d2] border-b-[#aaaaaa] text-[#217346]' : 'bg-[#e6e6e6] border-b-[#c6c6c6] text-[#333]'}`}>{r}</div>
            {columns.map((c, i) => {
              const shaded = (r === 1 && i < 2) || (r === 2 && i === 0);
              return <div key={c} className={`w-[72.040px] shrink-0 border-r border-b ${shaded ? 'bg-[#c6c6c6] border-[#a9a9a9]' : 'border-[#d4d4d4]'}`} />;
            })}
          </div>
        ))}
      </div>

      {/* selection */}
      <div className="absolute left-[26px] top-[222px] w-[146px] h-[51px] border-2 border-[#217346] shadow-[inset_0_0_0_1px_#fff]" />
      <div className="absolute left-[168px] top-[270px] w-[6px] h-[6px] bg-[#217346] border border-white" />

      <Watermark />

      {/* format cells dialog */}
      <div className="absolute left-[509px] top-[229px] w-[616px] h-[561px] rounded-[7px] border border-[#3d4a55] bg-[linear-gradient(180deg,#b9daf9_0%,#c6e2fa_10%,#c8e2f8_45%,#a9cff0_60%,#a6cdf0_80%,#c2dff6_100%)] flex flex-col px-[6px] pb-[6px] shadow-[0_0_0_1px_#dbe8f2]">
        <div className="h-[28px] shrink-0 flex items-start">
          <span className="ml-[1px] mt-[5px] text-[12px] leading-[18px] text-[#111]">设置单元格格式</span>
          <div className="flex-1" />
          <div className="w-[29px] h-[18px] border border-[#6a7a88] border-t-0 rounded-bl-[3px] bg-[linear-gradient(180deg,#e8eef4,#c3ccd6_50%,#a9b4be)] flex items-center justify-center text-[#333] text-[13px] font-bold leading-[14px] [font-family:'Liberation_Sans',sans-serif]">?</div>
          <div className="w-[46px] h-[18px] border border-[#6a3a34] border-t-0 border-l-0 rounded-br-[3px] bg-[linear-gradient(180deg,#dd9a8f,#c2554a_50%,#a7322a)] flex items-center justify-center">
            <svg width="11" height="10" viewBox="0 0 11 10"><path d="M1 1l9 8M10 1L1 9" stroke="#fff" strokeWidth="2.400" /></svg>
          </div>
        </div>
        <div className="flex-1 border border-[#68747e] bg-[#f0f0f0] flex flex-col pl-[6px] pt-[8px]">
          <div className="flex items-end h-[24px] relative">
            <div className="ml-[2px]" />
            <DialogTab label="数字" width="w-[52px]" />
            <DialogTab label="对齐" width="w-[52px]" />
            <DialogTab label="字体" width="w-[57px]" active />
            <DialogTab label="边框" width="w-[54px]" />
            <DialogTab label="填充" width="w-[52px]" />
            <DialogTab label="保护" width="w-[52px]" />
          </div>
          <div className="w-[587px] h-[448px] bg-white border border-[#8f969c] pl-[8px] pt-[11px] text-[#222]">
            <div className="flex">
              <div className="w-[336px]">
                <div className="h-[15px] leading-[15px]">字体(<span className="underline">F</span>):</div>
                <div className="mt-[3px] h-[23px] border border-[#9fa6ab] flex items-center pl-[3px] text-[#222]"><FontName rest="CN Medium" /></div>
                <ListBox
                  width="w-[336px]"
                  selected={3}
                  thumb="h-[15px] mt-[6px]"
                  items={['ExtraLight', 'Heavy', 'Light', 'Medium', 'Normal', 'Regular'].map(n => <FontName key={n} rest={`CN ${n}`} />)}
                />
              </div>
              <div className="ml-[10px] w-[108px]">
                <div className="h-[15px] leading-[15px]">字形(<span className="underline">O</span>):</div>
                <div className="mt-[3px] h-[23px] border border-[#9fa6ab] flex items-center pl-[3px]">常规</div>
                <ListBox width="w-[108px]" selected={1} disabled items={['倾斜', '常规', '加粗', '加粗倾斜']} />
              </div>
              <div className="ml-[9px] w-[108px]">
                <div className="h-[15px] leading-[15px]">字号(<span className="underline">S</span>):</div>
                <div className="mt-[3px] h-[23px] border border-[#9fa6ab] flex items-center pl-[3px] text-[13px] [font-family:'Open_Sans',sans-serif]">11</div>
                <ListBox width="w-[108px]" selected={3} thumb="h-[17px] mt-[2px]" grip items={['8', '9', '10', '11', '12', '14'].map(n => <span key={n} className="text-[13px] [font-family:'Open_Sans',sans-serif]">{n}</span>)} />
              </div>
            </div>

            <div className="flex mt-[4px]">
              <div className="w-[336px]">
                <div className="h-[15px] leading-[15px]">下划线(<span className="underline">U</span>):</div>
                <div className="mt-[5px] h-[24px] border border-[#9fa6ab] flex items-center justify-between pl-[3px]">无<ComboArrow /></div>
              </div>
              <div className="ml-[10px] w-[108px]">
                <div className="h-[15px] leading-[15px]">颜色(<span className="underline">C</span>):</div>
                <div className="mt-[5px] h-[22px] border-2 border-[#a9b0b5] flex items-center justify-between pl-[1px]">
                  <div className="w-[83px] h-[15px] bg-black" />
                  <ComboArrow />
                </div>
              </div>
              <div className="ml-[9px] w-[108px] pt-[20px]">
                <CheckBox label="普通字体" hot="N" />
              </div>
            </div>

            <div className="flex mt-[11px]">
              <div className="relative w-[335px] h-[86px] border border-[#d5dfe5] rounded-[4px] pl-[8px] pt-[14px]">
                <span className="absolute left-[5px] -top-[8px] bg-white px-[1px] leading-[15px]">特殊效果</span>
                <CheckBox label="删除线" hot="K" />
                <CheckBox label="上标" hot="E" />
                <CheckBox label="下标" hot="B" />
              </div>
              <div className="relative ml-[11px] w-[223px] h-[86px] border border-[#d5dfe5] rounded-[4px] pl-[8px] pt-[15px]">
                <span className="absolute left-[5px] -top-[8px] bg-white px-[1px] leading-[15px]">预览</span>
                <div className="w-[207px] h-[64px] border border-[#55606a] flex items-center justify-between px-[1px] text-[#111]">
                  <div className="w-[15px] h-[1px] mt-[12px] bg-[#222]" />
                  <FontName rest="CN Medium" size="text-[14.500px]" latin="text-[14.500px]" />
                  <div className="w-[16px] h-[1px] mt-[12px] bg-[#222]" />
                </div>
              </div>
            </div>

            <div className="mt-[39px] h-[16px] leading-[16px] text-[#222]">这是可缩放打印机常驻字体。屏幕上看到的与打印结果可能不同。</div>
          </div>
          <div className="flex justify-end gap-x-[10px] pt-[11px] pr-[6px]">
            <DialogButton label="确定" primary />
            <DialogButton label="取消" />
          </div>
        </div>
      </div>

      {/* annotation */}
      <div className="absolute left-[683px] top-[260px] w-[57px] h-[47px] border-x-[7px] border-y-[6px] border-[#ff3a3a]" />
      <svg width="40" height="112" viewBox="0 0 40 112" className="absolute left-[715px] top-[310px]">
        <path d="M13 5l15 20-6 2 11 81L14 28l-8 0z" fill="#ff3a3a" />
      </svg>
    </div>
  );
}
